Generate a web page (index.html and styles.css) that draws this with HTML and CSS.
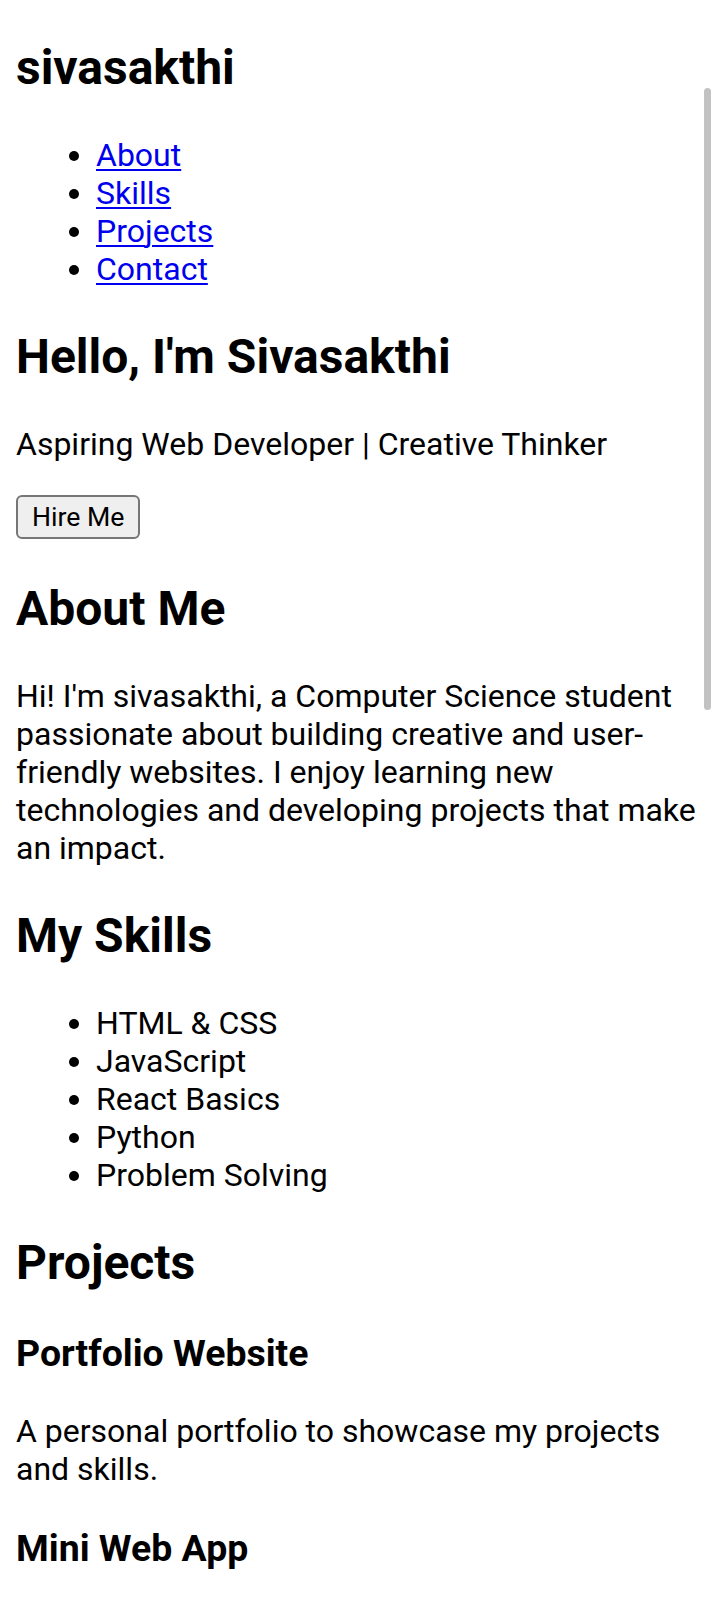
FILE: index.html
```html
<!DOCTYPE html>
<html lang="en">
<head>
<meta charset="utf-8">
<title>sivasakthi</title>
<link rel="stylesheet" href="styles.css">
</head>
<body>
<header class="site-header">
  <h1 class="logo">sivasakthi</h1>
  <nav>
    <ul class="nav-list">
      <li><a href="#about">About</a></li>
      <li><a href="#skills">Skills</a></li>
      <li><a href="#projects">Projects</a></li>
      <li><a href="#contact">Contact</a></li>
    </ul>
  </nav>
</header>
<section class="hero">
  <h2 class="heading">Hello, I'm Sivasakthi</h2>
  <p class="tagline">Aspiring Web Developer | Creative Thinker</p>
  <button class="btn" type="button">Hire Me</button>
</section>
<section id="about" class="block">
  <h2 class="heading">About Me</h2>
  <p class="text">Hi! I'm sivasakthi, a Computer Science student passionate about building creative and user-friendly websites. I enjoy learning new technologies and developing projects that make an impact.</p>
</section>
<section id="skills" class="block">
  <h2 class="heading">My Skills</h2>
  <ul class="skills-list">
    <li>HTML &amp; CSS</li>
    <li>JavaScript</li>
    <li>React Basics</li>
    <li>Python</li>
    <li>Problem Solving</li>
  </ul>
</section>
<section id="projects" class="block">
  <h2 class="heading">Projects</h2>
  <div class="project">
    <h3 class="project-title">Portfolio Website</h3>
    <p class="text">A personal portfolio to showcase my projects and skills.</p>
  </div>
  <div class="project">
    <h3 class="project-title">Mini Web App</h3>
    <p class="text">A simple responsive to-do app for managing daily tasks.</p>
  </div>
</section>
<div class="scroll-thumb"></div>
</body>
</html>
```
FILE: styles.css
```css
html {
  overflow: hidden;
}
body {
  margin: 0;
  padding: 0 16px;
  background: #ffffff;
  color: #000000;
  font-family: Roboto, "Noto Sans", sans-serif;
  font-size: 32px;
  line-height: 38px;
}
.logo {
  font-size: 48px;
  font-weight: bold;
  line-height: normal;
  margin: 38.5px 0 40px;
}
.nav-list {
  margin: 32px 0;
  padding-left: 80px;
}
.nav-list a {
  color: #0000ee;
  text-decoration: underline;
  text-decoration-thickness: 2px;
  text-underline-offset: 3px;
}
.heading {
  font-size: 48px;
  font-weight: bold;
  line-height: normal;
  margin: 40px 0;
}
.tagline {
  margin: 32px 0;
}
.btn {
  display: block;
  margin: 0 0 41.5px;
  padding: 4px 14px;
  font-family: Roboto, "Noto Sans", sans-serif;
  font-size: 26.67px;
  line-height: normal;
  color: #000000;
  background: #efefef;
  border: 2px solid #767676;
  border-radius: 6px;
}
.text {
  margin: 32px 0;
}
.skills-list {
  margin: 32px 0;
  padding-left: 80px;
}
.project-title {
  font-size: 37.44px;
  font-weight: bold;
  line-height: normal;
  margin: 37.44px 0;
}
.scroll-thumb {
  position: fixed;
  top: 88px;
  right: 9px;
  width: 7px;
  height: 622px;
  background: #c2c2c2;
  border-radius: 4px;
}
```
